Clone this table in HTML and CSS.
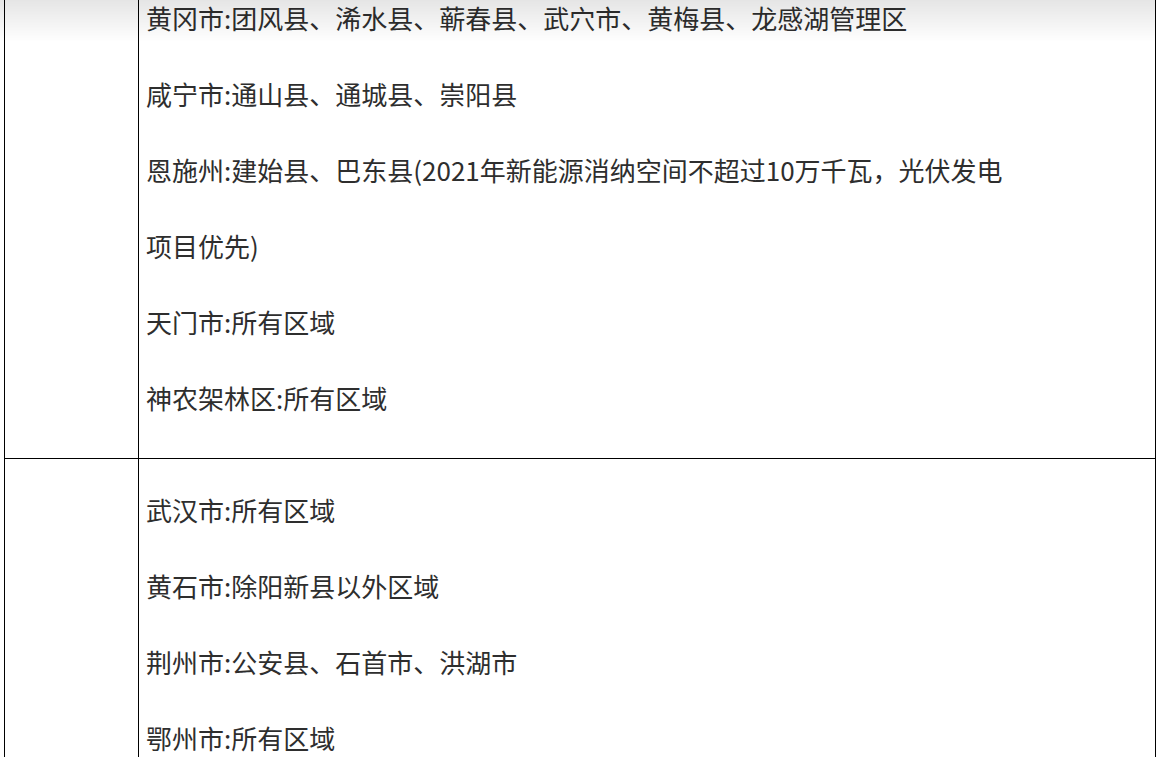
FILE: index.html
```html
<!DOCTYPE html>
<html lang="zh-CN">
<head>
<meta charset="utf-8">
<title>区域列表</title>
<link rel="stylesheet" href="styles.css">
</head>
<body>
<div class="page">
  <table class="regions">
    <colgroup>
      <col class="col-label">
      <col class="col-list">
    </colgroup>
    <tr>
      <td class="label"></td>
      <td class="list">
        <p>黄冈市:团风县、浠水县、蕲春县、武穴市、黄梅县、龙感湖管理区</p>
        <p>咸宁市:通山县、通城县、崇阳县</p>
        <p>恩施州:建始县、巴东县(2021年新能源消纳空间不超过10万千瓦，光伏发电<br>项目优先)</p>
        <p>天门市:所有区域</p>
        <p>神农架林区:所有区域</p>
      </td>
    </tr>
    <tr>
      <td class="label"></td>
      <td class="list">
        <p>武汉市:所有区域</p>
        <p>黄石市:除阳新县以外区域</p>
        <p>荆州市:公安县、石首市、洪湖市</p>
        <p>鄂州市:所有区域</p>
      </td>
    </tr>
  </table>
</div>
<div class="top-shade"></div>
</body>
</html>
```

FILE: styles.css
```css
html, body {
  margin: 0;
  padding: 0;
  background: #ffffff;
}

body {
  font-family: "Noto Sans CJK SC", "Microsoft YaHei", sans-serif;
  color: #2e2e2e;
  overflow: hidden;
}

.page {
  padding-left: 4px;
  margin-top: -34px;
}

.regions {
  border-collapse: collapse;
  table-layout: fixed;
  width: 1152px;
}

.col-label {
  width: 134px;
}

.regions td {
  border: 1px solid #000000;
  vertical-align: top;
}

.label {
  padding: 0;
}

.list {
  padding: 13px 7px 22px 7px;
}

.list p {
  margin: 0;
  font-size: 26px;
  line-height: 76px;
  white-space: nowrap;
}

.top-shade {
  position: fixed;
  top: 0;
  left: 0;
  width: 1156px;
  height: 42px;
  background: linear-gradient(to bottom, rgba(0, 0, 0, 0.1), rgba(0, 0, 0, 0));
  pointer-events: none;
}
```
